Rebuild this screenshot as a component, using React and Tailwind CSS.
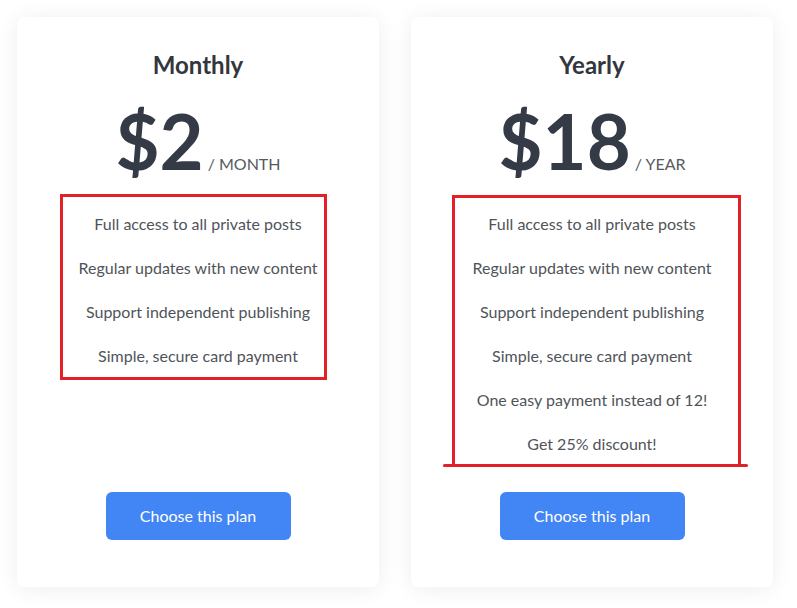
import React from "react";

const plans = [
  {
    name: "Monthly",
    price: "$2",
    period: "/ MONTH",
    features: [
      "Full access to all private posts",
      "Regular updates with new content",
      "Support independent publishing",
      "Simple, secure card payment",
    ],
  },
  {
    name: "Yearly",
    price: "$18",
    period: "/ YEAR",
    features: [
      "Full access to all private posts",
      "Regular updates with new content",
      "Support independent publishing",
      "Simple, secure card payment",
      "One easy payment instead of 12!",
      "Get 25% discount!",
    ],
  },
];

function Card({ plan, children }) {
  return (
    <div className="relative flex w-[362px] flex-col items-center rounded-lg bg-white pt-8 pb-[47px] shadow-[0_2px_22px_rgba(0,0,0,0.07)]">
      <h2 className="text-2xl leading-8 font-bold text-[#33363c]">{plan.name}</h2>
      <div className="mt-[22px] flex items-baseline">
        <span className="text-[76px] leading-none font-bold text-[#343a46]">{plan.price}</span>
        <span className="ml-1 text-base text-[#555a60]">{plan.period}</span>
      </div>
      <ul className="mt-[23px] mb-[26px] flex flex-col items-center">
        {plan.features.map((f, i) => (
          <li key={i} className="text-base leading-[44px] text-[#50545a]">
            {f}
          </li>
        ))}
      </ul>
      <button className="mt-auto h-12 w-[185px] rounded-md bg-[#4285f4] text-base text-white">
        Choose this plan
      </button>
      {children}
    </div>
  );
}

export default function App() {
  return (
    <div className="min-h-[608px] bg-white font-['Lato','Liberation_Sans',sans-serif]">
      <div className="flex items-stretch gap-8 pt-[17px] pl-[17px]">
        <Card plan={plans[0]}>
          <div className="absolute top-[177px] left-[43px] h-[186px] w-[267px] border-[3px] border-[#e32025]" />
        </Card>
        <div className="relative">
          <Card plan={plans[1]}>
            <div className="absolute top-[178px] left-[41px] h-[272px] w-[289px] border-x-[3px] border-t-[3px] border-[#e32025]" />
            <div className="absolute top-[447px] left-[32px] h-[3px] w-[305px] rounded-full bg-[#e32025]" />
          </Card>
        </div>
      </div>
    </div>
  );
}
